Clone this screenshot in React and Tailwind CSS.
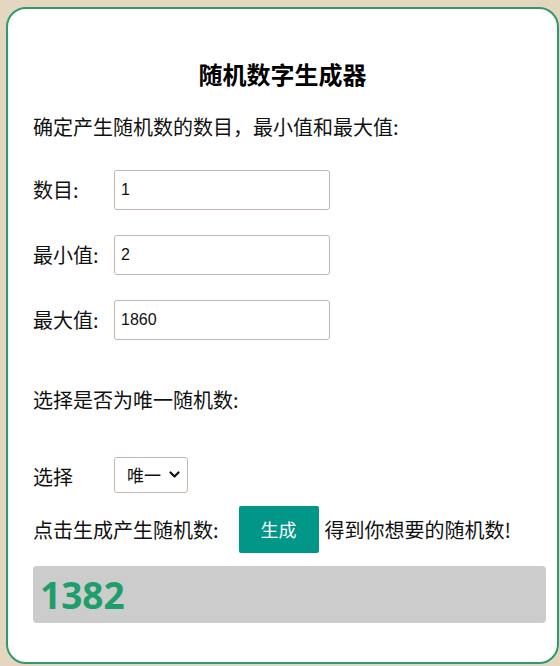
import React from "react";

export default function App() {
  const cjk = { fontFamily: '"Noto Sans CJK SC", "Noto Sans", sans-serif' };
  return (
    <div className="min-h-[666px] bg-[#e5d6c0] pt-[7px] pl-[6px]" style={cjk}>
      <div className="w-[553px] h-[657px] border-2 border-[#2f9a6d] rounded-[20px] bg-white pl-[25px] pr-[11px] pt-[51px] text-[#111]">
        <h2 className="-ml-[25px] -mr-[11px] text-center text-[24px] leading-[28px] font-bold text-black">随机数字生成器</h2>
        <p className="mt-[25px] text-[20px] leading-[28px]">确定产生随机数的数目，最小值和最大值:</p>

        <div className="mt-[29px] flex items-center h-[40px]">
          <span className="w-[81px] text-[20px] leading-[28px]">数目:</span>
          <input
            defaultValue="1"
            className="w-[216px] h-[40px] border border-[#c4b6ac] rounded-[3px] px-[6px] text-[16px] text-[#111] outline-none"
            style={{ fontFamily: '"Liberation Sans", Arial, sans-serif' }}
          />
        </div>
        <div className="mt-[25px] flex items-center h-[40px]">
          <span className="w-[81px] text-[20px] leading-[28px]">最小值:</span>
          <input
            defaultValue="2"
            className="w-[216px] h-[40px] border border-[#c4b6ac] rounded-[3px] px-[6px] text-[16px] text-[#111] outline-none"
            style={{ fontFamily: '"Liberation Sans", Arial, sans-serif' }}
          />
        </div>
        <div className="mt-[25px] flex items-center h-[40px]">
          <span className="w-[81px] text-[20px] leading-[28px]">最大值:</span>
          <input
            defaultValue="1860"
            className="w-[216px] h-[40px] border border-[#c4b6ac] rounded-[3px] px-[6px] text-[16px] text-[#111] outline-none"
            style={{ fontFamily: '"Liberation Sans", Arial, sans-serif' }}
          />
        </div>

        <p className="mt-[46px] text-[20px] leading-[28px]">选择是否为唯一随机数:</p>

        <div className="mt-[43px] flex items-center h-[36px]">
          <span className="w-[81px] text-[20px] leading-[28px] pt-[4px]">选择</span>
          <div className="relative w-[74px] h-[36px]">
            <select
              className="appearance-none w-[74px] h-[36px] border border-[#c4b6ac] rounded-[3px] pl-[12px] text-[17px] bg-white text-[#111] outline-none"
              style={cjk}
              defaultValue="唯一"
            >
              <option>唯一</option>
              <option>不唯一</option>
            </select>
            <svg
              className="absolute right-[8px] top-[13px] pointer-events-none"
              width="11"
              height="9"
              viewBox="0 0 11 9"
            >
              <path d="M1.5 2.5 L5.5 6.5 L9.5 2.5" fill="none" stroke="#111" strokeWidth="2.2" strokeLinecap="round" strokeLinejoin="round" />
            </svg>
          </div>
        </div>

        <div className="mt-[13px] flex items-center h-[47px]">
          <span className="text-[20px] leading-[28px]">点击生成产生随机数:</span>
          <button className="ml-[20px] w-[80px] h-[47px] bg-[#009688] text-white text-[18px] rounded-[2px]" style={cjk}>
            生成
          </button>
          <span className="ml-[6px] text-[20px] leading-[28px]">得到你想要的随机数!</span>
        </div>

        <div className="mt-[13px] h-[57px] bg-[#cccccc] rounded-[4px] pl-[7px] flex items-center">
          <span
            className="text-[37px] font-bold text-[#1e9e6b] leading-none"
            style={{ fontFamily: '"Noto Sans", "Open Sans", sans-serif' }}
          >
            1382
          </span>
        </div>
      </div>
    </div>
  );
}
